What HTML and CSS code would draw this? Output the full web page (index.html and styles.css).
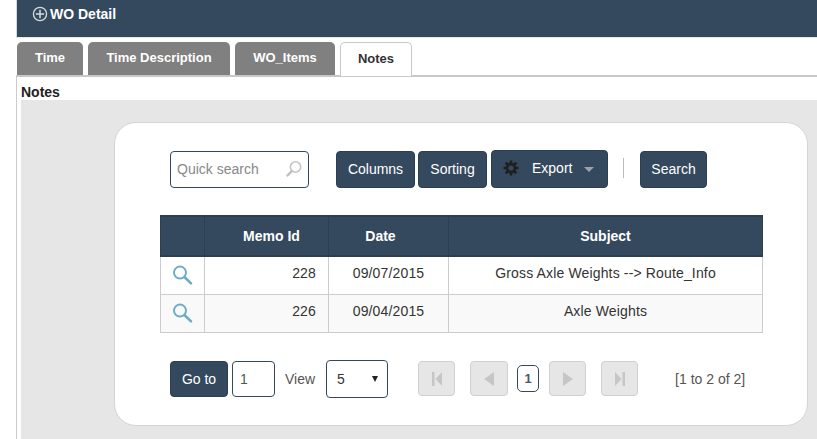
FILE: index.html
```html
<!DOCTYPE html>
<html lang="en">
<head>
<meta charset="utf-8">
<title>WO Detail</title>
<link rel="stylesheet" href="styles.css">
</head>
<body>
<div class="page">
  <header class="bar">
    <svg class="plus" width="16" height="16" viewBox="0 0 16 16"><circle cx="8" cy="8" r="6.6" fill="none" stroke="#d5dbe0" stroke-width="1.3"/><path d="M8 3.800v8.400M3.800 8h8.400" stroke="#d5dbe0" stroke-width="1.5"/></svg>
    <span>WO Detail</span>
  </header>
  <nav class="tabs">
    <div class="tab t1">Time</div>
    <div class="tab t2">Time Description</div>
    <div class="tab t3">WO_Items</div>
    <div class="tab active">Notes</div>
  </nav>
  <main class="content">
    <div class="label">Notes</div>
    <div class="panel">
      <section class="card">
        <div class="toolbar">
          <div class="quick">
            <span>Quick search</span>
            <svg width="18" height="18" viewBox="0 0 18 18"><circle cx="10.5" cy="7" r="5.2" fill="none" stroke="#c4c4c4" stroke-width="1.6"/><path d="M6.800 11 2.500 15.500" stroke="#bdbdbd" stroke-width="2.4" stroke-linecap="round"/></svg>
          </div>
          <button class="btn columns">Columns</button>
          <button class="btn sorting">Sorting</button>
          <button class="btn export">
            <svg width="18" height="18" viewBox="0 0 18 18"><g stroke="#1f1f1f" stroke-width="2.6"><path d="M9 1.500v15M1.500 9h15M3.700 3.700l10.600 10.600M14.300 3.700 3.700 14.300"/></g><circle cx="9" cy="9" r="5.4" fill="#1f1f1f"/><circle cx="9" cy="9" r="2.6" fill="#34495e"/></svg>
            <span class="export-text">Export</span>
            <i class="caret"></i>
          </button>
          <div class="divider"></div>
          <button class="btn search">Search</button>
        </div>
        <table class="grid">
          <colgroup><col class="c1"><col class="c2"><col class="c3"><col class="c4"></colgroup>
          <thead>
            <tr><th></th><th class="h-memo">Memo Id</th><th class="h-date">Date</th><th>Subject</th></tr>
          </thead>
          <tbody>
            <tr>
              <td class="ic"><svg width="22" height="22" viewBox="0 0 22 22"><circle cx="9" cy="8.600" r="6" fill="none" stroke="#6cadc4" stroke-width="2"/><path d="M13.400 13 20 19.400" stroke="#6cadc4" stroke-width="2.6" stroke-linecap="round"/></svg></td>
              <td class="num">228</td><td class="mid">09/07/2015</td><td class="mid">Gross Axle Weights --&gt; Route_Info</td>
            </tr>
            <tr class="alt">
              <td class="ic"><svg width="22" height="22" viewBox="0 0 22 22"><circle cx="9" cy="8.600" r="6" fill="none" stroke="#6cadc4" stroke-width="2"/><path d="M13.400 13 20 19.400" stroke="#6cadc4" stroke-width="2.6" stroke-linecap="round"/></svg></td>
              <td class="num">226</td><td class="mid">09/04/2015</td><td class="mid">Axle Weights</td>
            </tr>
          </tbody>
        </table>
        <div class="pager">
          <button class="btn goto">Go to</button>
          <div class="field page-input">1</div>
          <span class="view">View</span>
          <div class="field select"><span>5</span><i class="down"></i></div>
          <button class="nav first"><svg width="10" height="14" viewBox="0 0 10 14"><path d="M0 0h2.500v14H0zM10 0v14L3.500 7z" fill="#c6c6c6"/></svg></button>
          <button class="nav prev"><svg width="10" height="14" viewBox="0 0 10 14"><path d="M10 0v14L0 7z" fill="#c6c6c6"/></svg></button>
          <div class="current">1</div>
          <button class="nav next"><svg width="10" height="14" viewBox="0 0 10 14"><path d="M0 0v14l10-7z" fill="#c6c6c6"/></svg></button>
          <button class="nav last"><svg width="10" height="14" viewBox="0 0 10 14"><path d="M0 0v14l6.500-7zM7.500 0H10v14H7.500z" fill="#c6c6c6"/></svg></button>
          <span class="range">[1 to 2 of 2]</span>
        </div>
      </section>
    </div>
  </main>
</div>
</body>
</html>
```
FILE: styles.css
```css
* { box-sizing: border-box; }
html, body { margin: 0; padding: 0; height: 100%; overflow: hidden; background: #fff; }
body { font-family: "Liberation Sans", Arial, sans-serif; font-size: 14px; color: #333; }
.page { margin-left: 16px; height: 439px; display: flex; flex-direction: column; }
.bar { height: 38px; flex: none; background: #34495e; color: #fff; font-weight: bold; font-size: 14px; display: flex; align-items: center; padding: 0 0 9px 15px; gap: 2px; border-left: 1px solid #d8d8d8; border-bottom: 1px solid #e6e6e6; }
.tabs { height: 39px; flex: none; padding: 4px 0 0 1px; display: flex; gap: 5px; border-bottom: 2px solid #c8c8c8; }
.tab { height: 33px; background: #808080; color: #fff; font-weight: bold; font-size: 13px; line-height: 32px; text-align: center; border-radius: 5px 5px 0 0; }
.t1 { width: 66px; }
.t2 { width: 142px; }
.t3 { width: 100px; }
.active { width: 72px; height: 34px; background: #fff; color: #333; border: 1px solid #c8c8c8; border-bottom: 0; font-size: 13px; }
.content { flex: 1; min-height: 0; border-left: 1px solid #ccc; padding-left: 4px; display: flex; flex-direction: column; }
.label { height: 23px; flex: none; font-weight: bold; font-size: 14px; line-height: 30px; color: #222; }
.panel { flex: 1; background: #e6e6e6; padding: 22px 9px 0 93px; }
.card { height: 304px; background: #fff; border: 1px solid #d4d4d4; border-radius: 22px; padding: 27px 0 0 55px; }
.toolbar { display: flex; align-items: center; height: 38px; }
.quick { width: 139px; height: 37px; border: 1px solid #34495e; border-radius: 4px; display: flex; align-items: center; justify-content: space-between; padding: 0 5px 1px 6px; color: #888; font-size: 14px; }
.btn { border: 1px solid #2c3e50; background: #34495e; color: #fff; border-radius: 4px; font: 14px "Liberation Sans", Arial, sans-serif; padding: 0; }
.columns { width: 79px; height: 37px; margin-left: 27px; }
.sorting { width: 69px; height: 37px; margin-left: 3px; }
.export { width: 117px; height: 38px; margin-left: 4px; display: flex; align-items: center; padding: 0 0 2px 10px; }
.export-text { margin-left: 12px; }
.caret { margin-left: 12px; margin-top: 3px; border-left: 5px solid transparent; border-right: 5px solid transparent; border-top: 5px solid #9aa3ac; }
.divider { width: 1px; height: 20px; background: #bbb; margin-left: 15px; margin-bottom: 2px; }
.search { width: 67px; height: 37px; margin-left: 16px; }
.grid { width: 602px; margin: 27px 0 0 -10px; border-collapse: collapse; table-layout: fixed; }
.c1 { width: 44px; } .c2 { width: 124px; } .c3 { width: 120px; } .c4 { width: 314px; }
.grid th { height: 40px; padding: 0 0 1px; background: #34495e; color: #fff; font-size: 14px; font-weight: bold; text-align: center; border: 1px solid #2c3e50; border-width: 2px 1px; }
.grid th.h-memo { padding-left: 10px; }
.grid th.h-date { padding-right: 16px; }
.grid td { height: 38px; padding: 0 0 4px; border: 1px solid #ccc; color: #333; font-size: 14px; letter-spacing: .15px; }
.alt td { background: #f9f9f9; }
.grid td.ic { padding: 0 0 0 10px; line-height: 0; }
.grid td.num { text-align: right; padding-right: 12px; }
.grid td.mid { text-align: center; }
.pager { display: flex; align-items: center; height: 38px; margin-top: 27px; }
.goto { width: 58px; height: 36px; }
.field { border: 1px solid #34495e; border-radius: 4px; background: #fff; color: #555; }
.page-input { width: 43px; height: 36px; margin-left: 4px; line-height: 34px; padding-left: 7px; }
.view { margin-left: 10px; color: #555; }
.select { width: 62px; height: 38px; margin-left: 11px; display: flex; align-items: center; justify-content: space-between; padding: 0 9px 0 10px; color: #333; }
.down { border-left: 3.5px solid transparent; border-right: 3.5px solid transparent; border-top: 6px solid #222; }
.nav { height: 35px; background: #e6e6e6; border: 1px solid #d0d0d0; border-radius: 4px; display: flex; align-items: center; justify-content: center; padding: 0; }
.first { width: 37px; margin-left: 30px; }
.prev { width: 38px; margin-left: 15px; }
.current { width: 22px; height: 27px; margin-left: 9px; border: 1px solid #34495e; border-radius: 5px; text-align: center; line-height: 26px; font-weight: bold; font-size: 13px; color: #4a5a6a; }
.next { width: 37px; margin-left: 10px; }
.last { width: 37px; margin-left: 15px; }
.range { margin-left: 37px; color: #555; }
```
